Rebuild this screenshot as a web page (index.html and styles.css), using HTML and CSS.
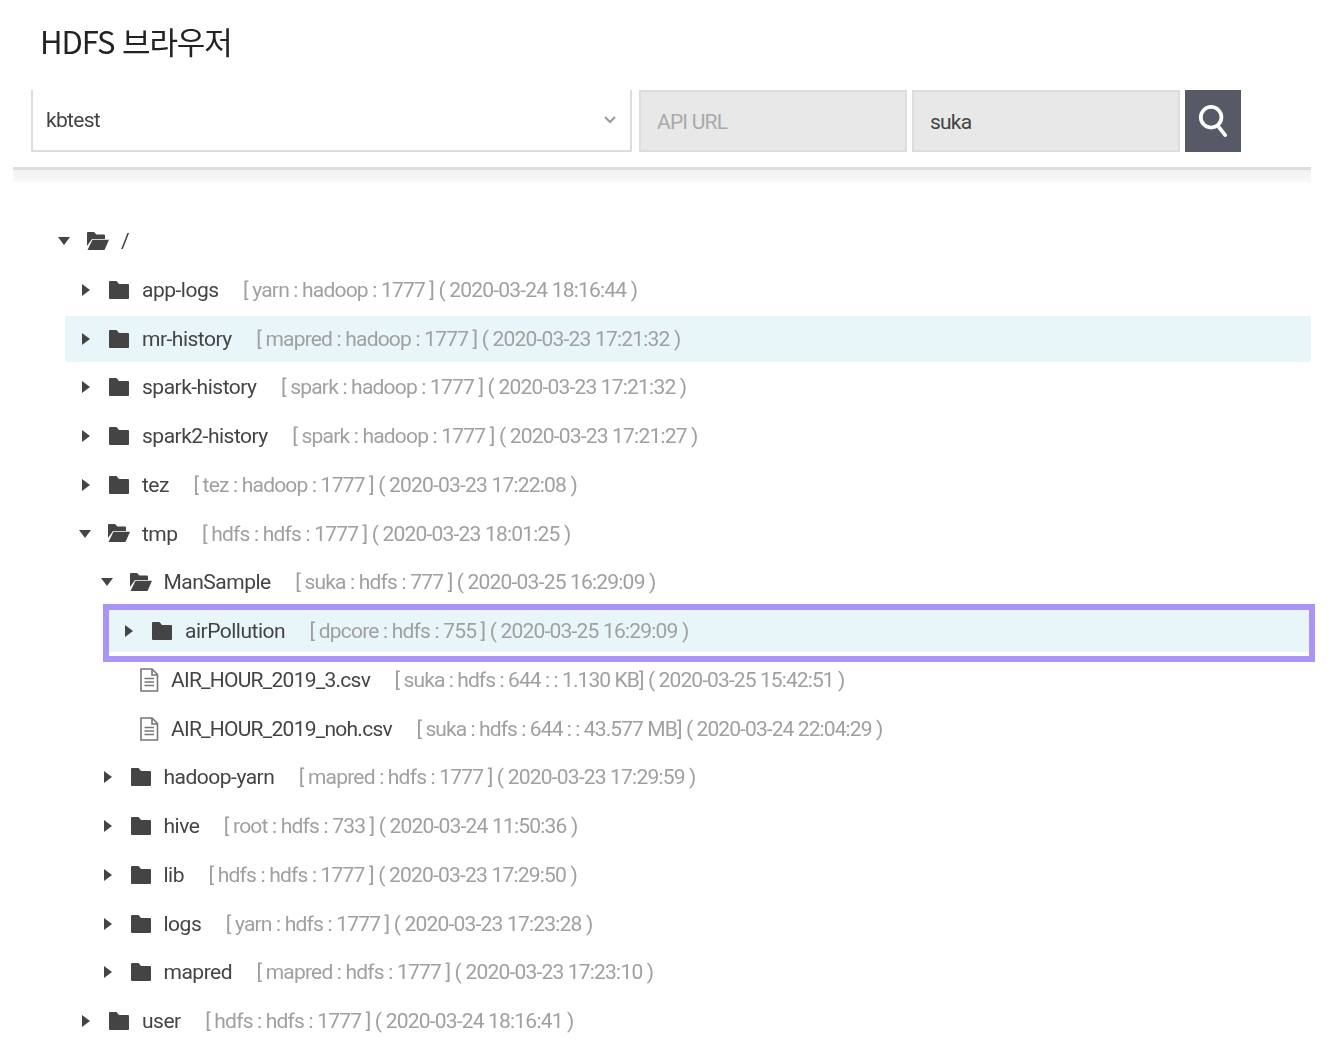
FILE: index.html
```html
<!DOCTYPE html>
<html lang="ko">
<head>
    <meta charset="UTF-8">
    <title>HDFS 브라우저</title>
    <link rel="stylesheet" href="styles.css">
</head>
<body>

<svg class="defs" width="0" height="0">
    <symbol id="closed" viewBox="0 0 20 18"><path d="M1 0h6.500l2.500 3h9a1 1 0 0 1 1 1v13a1 1 0 0 1-1 1H1a1 1 0 0 1-1-1V1a1 1 0 0 1 1-1z"/></symbol>
    <symbol id="open" viewBox="0 0 22 19"><path d="M1 0h6l2.500 2.500H17a1 1 0 0 1 1 1V7H5L0 14V1a1 1 0 0 1 1-1z"/><path d="M5.500 7.800H22L17.500 18H0.500z"/></symbol>
    <symbol id="file" viewBox="0 0 20 24"><path class="line" d="M2 1h11l5.500 5.500V23H2zM13 1v6h5.500M5.500 10.500h9.500M5.500 14h9.500M5.500 17.500h9.500"/></symbol>
</svg>

<div class="page">
    <h1 class="title">HDFS 브라우저</h1>

    <div class="toolbar">
        <div class="select">
            <span>kbtest</span>
            <svg class="chevron" viewBox="0 0 12 8"><path d="M1 1l5 5 5-5"/></svg>
        </div>
        <input class="field" type="text" placeholder="API URL" disabled>
        <input class="field" type="text" value="suka" disabled>
        <button class="search" type="button">
            <svg viewBox="0 0 32 36"><circle cx="14" cy="14" r="11"/><path d="M21 23l8 10"/></svg>
        </button>
    </div>
    <div class="divider"></div>

    <ul class="tree">
        <li class="row lv0"><i class="arrow down"></i><svg class="ico open"><use href="#open"/></svg><span class="name">/</span></li>
        <li class="row lv1"><i class="arrow"></i><svg class="ico"><use href="#closed"/></svg><span class="name">app-logs</span><span class="meta">[ yarn : hadoop : 1777 ] ( 2020-03-24 18:16:44 )</span></li>
        <li class="row lv1 hl"><i class="arrow"></i><svg class="ico"><use href="#closed"/></svg><span class="name">mr-history</span><span class="meta">[ mapred : hadoop : 1777 ] ( 2020-03-23 17:21:32 )</span></li>
        <li class="row lv1"><i class="arrow"></i><svg class="ico"><use href="#closed"/></svg><span class="name">spark-history</span><span class="meta">[ spark : hadoop : 1777 ] ( 2020-03-23 17:21:32 )</span></li>
        <li class="row lv1"><i class="arrow"></i><svg class="ico"><use href="#closed"/></svg><span class="name">spark2-history</span><span class="meta">[ spark : hadoop : 1777 ] ( 2020-03-23 17:21:27 )</span></li>
        <li class="row lv1"><i class="arrow"></i><svg class="ico"><use href="#closed"/></svg><span class="name">tez</span><span class="meta">[ tez : hadoop : 1777 ] ( 2020-03-23 17:22:08 )</span></li>
        <li class="row lv1"><i class="arrow down"></i><svg class="ico open"><use href="#open"/></svg><span class="name">tmp</span><span class="meta">[ hdfs : hdfs : 1777 ] ( 2020-03-23 18:01:25 )</span></li>
        <li class="row lv2"><i class="arrow down"></i><svg class="ico open"><use href="#open"/></svg><span class="name">ManSample</span><span class="meta">[ suka : hdfs : 777 ] ( 2020-03-25 16:29:09 )</span></li>
        <li class="row lv3 hl picked"><i class="arrow"></i><svg class="ico"><use href="#closed"/></svg><span class="name">airPollution</span><span class="meta">[ dpcore : hdfs : 755 ] ( 2020-03-25 16:29:09 )</span><span class="mark"></span></li>
        <li class="row lv3 leaf"><svg class="ico doc"><use href="#file"/></svg><span class="name">AIR_HOUR_2019_3.csv</span><span class="meta">[ suka : hdfs : 644 : : 1.130 KB] ( 2020-03-25 15:42:51 )</span></li>
        <li class="row lv3 leaf"><svg class="ico doc"><use href="#file"/></svg><span class="name">AIR_HOUR_2019_noh.csv</span><span class="meta">[ suka : hdfs : 644 : : 43.577 MB] ( 2020-03-24 22:04:29 )</span></li>
        <li class="row lv2"><i class="arrow"></i><svg class="ico"><use href="#closed"/></svg><span class="name">hadoop-yarn</span><span class="meta">[ mapred : hdfs : 1777 ] ( 2020-03-23 17:29:59 )</span></li>
        <li class="row lv2"><i class="arrow"></i><svg class="ico"><use href="#closed"/></svg><span class="name">hive</span><span class="meta">[ root : hdfs : 733 ] ( 2020-03-24 11:50:36 )</span></li>
        <li class="row lv2"><i class="arrow"></i><svg class="ico"><use href="#closed"/></svg><span class="name">lib</span><span class="meta">[ hdfs : hdfs : 1777 ] ( 2020-03-23 17:29:50 )</span></li>
        <li class="row lv2"><i class="arrow"></i><svg class="ico"><use href="#closed"/></svg><span class="name">logs</span><span class="meta">[ yarn : hdfs : 1777 ] ( 2020-03-23 17:23:28 )</span></li>
        <li class="row lv2"><i class="arrow"></i><svg class="ico"><use href="#closed"/></svg><span class="name">mapred</span><span class="meta">[ mapred : hdfs : 1777 ] ( 2020-03-23 17:23:10 )</span></li>
        <li class="row lv1"><i class="arrow"></i><svg class="ico"><use href="#closed"/></svg><span class="name">user</span><span class="meta">[ hdfs : hdfs : 1777 ] ( 2020-03-24 18:16:41 )</span></li>
    </ul>
</div>

</body>
</html>
```

FILE: styles.css
```css
*{
    margin: 0;
    padding: 0;
    list-style: none;
    box-sizing: border-box;
}

body{
    background: #fff;
    color: #555;
    font-family: Roboto, "Noto Sans CJK KR", sans-serif;
}

.defs{
    display: block;
    height: 0;
}

.page{
    height: 1062px;
    overflow: hidden;
    padding: 18px 19px 0 13px;
}

.title{
    height: 72px;
    padding-left: 27px;
    font-family: "Noto Sans CJK KR", sans-serif;
    font-size: 31px;
    line-height: 46px;
    font-weight: 400;
    letter-spacing: -1.100px;
    color: #222;
    filter: blur(.5px);
}

.toolbar{
    display: flex;
    height: 62px;
    margin-left: 18px;
}

.select{
    display: flex;
    align-items: center;
    justify-content: space-between;
    width: 601px;
    padding: 0 14px;
    border: 2px solid #ddd;
    border-top: 0;
    font-size: 21px;
    letter-spacing: -0.700px;
}

.select span{
    margin-left: -1px;
    color: #444;
    filter: blur(.5px);
}

.chevron{
    width: 12px;
    height: 8px;
    fill: none;
    stroke: #999;
    stroke-width: 2;
}

.field{
    width: 268px;
    margin-left: 7px;
    padding: 2px 16px 0;
    border: 2px solid #ddd;
    background: #e8e8e8;
    color: #444;
    font-family: inherit;
    font-size: 21px;
    letter-spacing: -0.800px;
}

.field + .field{
    margin-left: 5px;
}

.field::placeholder{
    color: #aaa;
}

.search{
    width: 56px;
    margin-left: 5px;
    border: 0;
    background: #555a66;
}

.search svg{
    display: block;
    width: 30px;
    height: 34px;
    margin: auto;
    fill: none;
    stroke: #fff;
    stroke-width: 4;
    stroke-linecap: round;
}

.divider{
    height: 15px;
    margin-top: 15px;
    border-top: 3px solid #ddd;
    background: linear-gradient(#f2f2f2, #f8f8f8);
}

.tree{
    margin-top: 36px;
}

.row{
    position: relative;
    display: flex;
    align-items: center;
    height: 46px;
    margin-bottom: 2.750px;
    font-size: 21px;
    letter-spacing: -0.500px;
    white-space: nowrap;
}

.lv0{ margin-left: 31px; }
.lv1{ margin-left: 52px; }
.lv2{ margin-left: 73.500px; }
.lv3{ margin-left: 95px; }

.hl{
    background: #e9f6f9;
    border-radius: 3px;
}

.arrow{
    flex: none;
    width: 0;
    height: 0;
    margin: 0 19px 0 17px;
    border-style: solid;
    border-width: 6px 0 6px 8px;
    border-color: transparent transparent transparent #444;
}

.arrow.down{
    margin: 0 17px 0 14px;
    border-width: 8px 6px 0;
    border-color: #444 transparent transparent;
}

.ico{
    flex: none;
    width: 20px;
    height: 18px;
    margin-right: 13px;
    fill: #444;
    filter: blur(.4px);
}

.ico.open{
    width: 22px;
    height: 19px;
    margin-right: 12px;
}

.ico.doc{
    width: 20px;
    height: 24px;
    margin: 0 12px 0 31px;
}

.line{
    fill: none;
    stroke: #777;
    stroke-width: 1.600;
}

.name{
    margin-right: 24.500px;
    color: #444;
    filter: blur(.5px);
}

.meta{
    color: #a0a0a0;
    letter-spacing: -0.800px;
    filter: blur(.5px);
}

.leaf .name{
    letter-spacing: -0.750px;
}

.leaf .meta{
    letter-spacing: -0.900px;
}

.mark{
    position: absolute;
    top: -4px;
    right: -4px;
    bottom: -8px;
    left: -5px;
    border: 6px solid #aa94f5;
    background: linear-gradient(to top, #fff 4px, transparent 4px);
}
```
